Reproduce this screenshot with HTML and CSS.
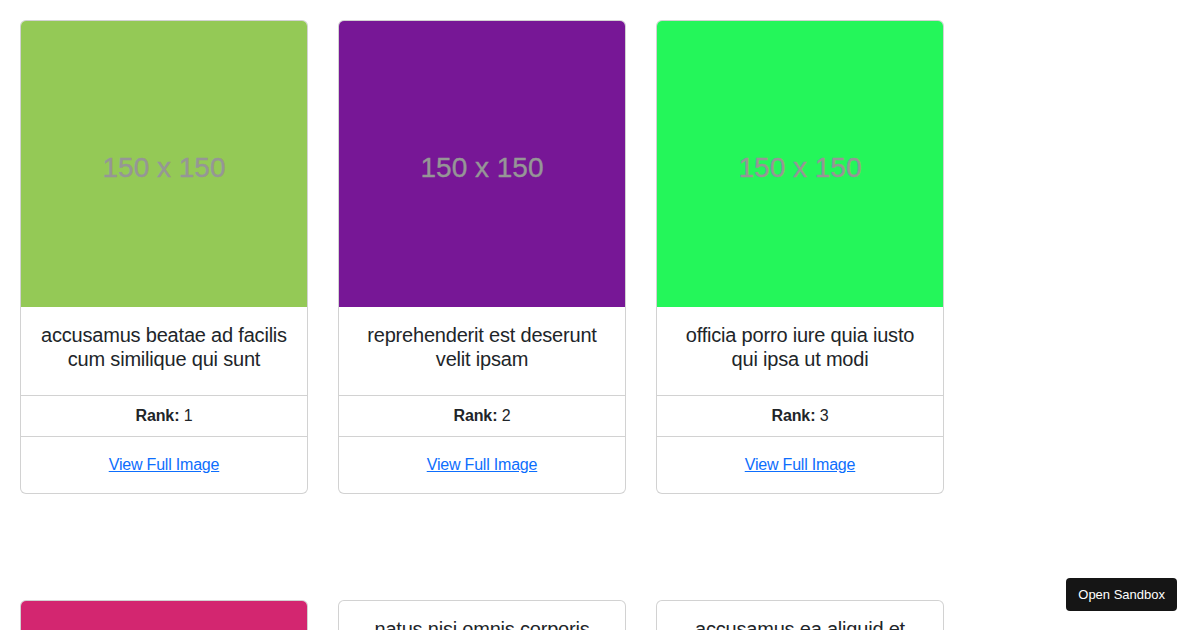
FILE: index.html
```html
<!DOCTYPE html>
<html lang="en">
<head>
  <meta charset="UTF-8">
  <title>Photo Gallery</title>
  <link rel="stylesheet" href="styles.css">
</head>
<body>
  <div class="gallery">
    <div class="card">
      <div class="thumb" style="background: #94c956"><span>150 x 150</span></div>
      <div class="card-body">
        <h5 class="card-title">accusamus beatae ad facilis cum similique qui sunt</h5>
      </div>
      <div class="rank"><b>Rank:</b> 1</div>
      <div class="card-body">
        <a href="#">View Full Image</a>
      </div>
    </div>

    <div class="card">
      <div class="thumb" style="background: #771796"><span>150 x 150</span></div>
      <div class="card-body">
        <h5 class="card-title">reprehenderit est deserunt velit ipsam</h5>
      </div>
      <div class="rank"><b>Rank:</b> 2</div>
      <div class="card-body">
        <a href="#">View Full Image</a>
      </div>
    </div>

    <div class="card">
      <div class="thumb" style="background: #24f65a"><span>150 x 150</span></div>
      <div class="card-body">
        <h5 class="card-title">officia porro iure quia iusto qui ipsa ut modi</h5>
      </div>
      <div class="rank"><b>Rank:</b> 3</div>
      <div class="card-body">
        <a href="#">View Full Image</a>
      </div>
    </div>

    <div class="card">
      <div class="thumb" style="background: #d32670"><span>150 x 150</span></div>
      <div class="card-body">
        <h5 class="card-title">culpa odio esse rerum omnis laboriosam voluptate repudiandae</h5>
      </div>
      <div class="rank"><b>Rank:</b> 4</div>
      <div class="card-body">
        <a href="#">View Full Image</a>
      </div>
    </div>

    <div class="card">
      <div class="card-body">
        <h5 class="card-title">natus nisi omnis corporis facere molestiae rerum in</h5>
      </div>
      <div class="rank"><b>Rank:</b> 5</div>
      <div class="card-body">
        <a href="#">View Full Image</a>
      </div>
    </div>

    <div class="card">
      <div class="card-body">
        <h5 class="card-title">accusamus ea aliquid et amet sequi nemo</h5>
      </div>
      <div class="rank"><b>Rank:</b> 6</div>
      <div class="card-body">
        <a href="#">View Full Image</a>
      </div>
    </div>
  </div>

  <a class="sandbox-btn" href="#">Open Sandbox</a>
</body>
</html>
```

FILE: styles.css
```css
body {
  margin: 0;
  padding: 20px;
  background: #fff;
  color: #212529;
  font-family: "Liberation Sans", Arial, sans-serif;
  font-size: 16px;
  line-height: 1.5;
}

.gallery {
  display: grid;
  grid-template-columns: repeat(3, 288px);
  column-gap: 30px;
  row-gap: 106px;
  align-items: start;
}

.card {
  border: 1px solid rgba(0, 0, 0, 0.175);
  border-radius: 6px;
  overflow: hidden;
  background: #fff;
}

.thumb {
  height: 286px;
  display: flex;
  align-items: center;
  justify-content: center;
}

.thumb span {
  color: #969696;
  font-size: 28px;
  line-height: 1;
  margin-top: 8px;
  -webkit-text-stroke: 0.4px #969696;
}

.card-body {
  padding: 16px;
  text-align: center;
}

.card-title {
  margin: 0 0 8px;
  font-size: 20px;
  font-weight: 400;
  line-height: 1.2;
  letter-spacing: -0.2px;
}

.rank {
  padding: 8px 16px;
  text-align: center;
  letter-spacing: -0.1px;
  border-top: 1px solid rgba(0, 0, 0, 0.175);
  border-bottom: 1px solid rgba(0, 0, 0, 0.175);
}

.card-body a {
  color: #0d6efd;
  letter-spacing: -0.2px;
}

.sandbox-btn {
  position: fixed;
  right: 23px;
  bottom: 19px;
  padding: 8px 12px;
  background: #151515;
  color: #fff;
  font-size: 13px;
  line-height: 17px;
  border-radius: 4px;
  text-decoration: none;
}
```
